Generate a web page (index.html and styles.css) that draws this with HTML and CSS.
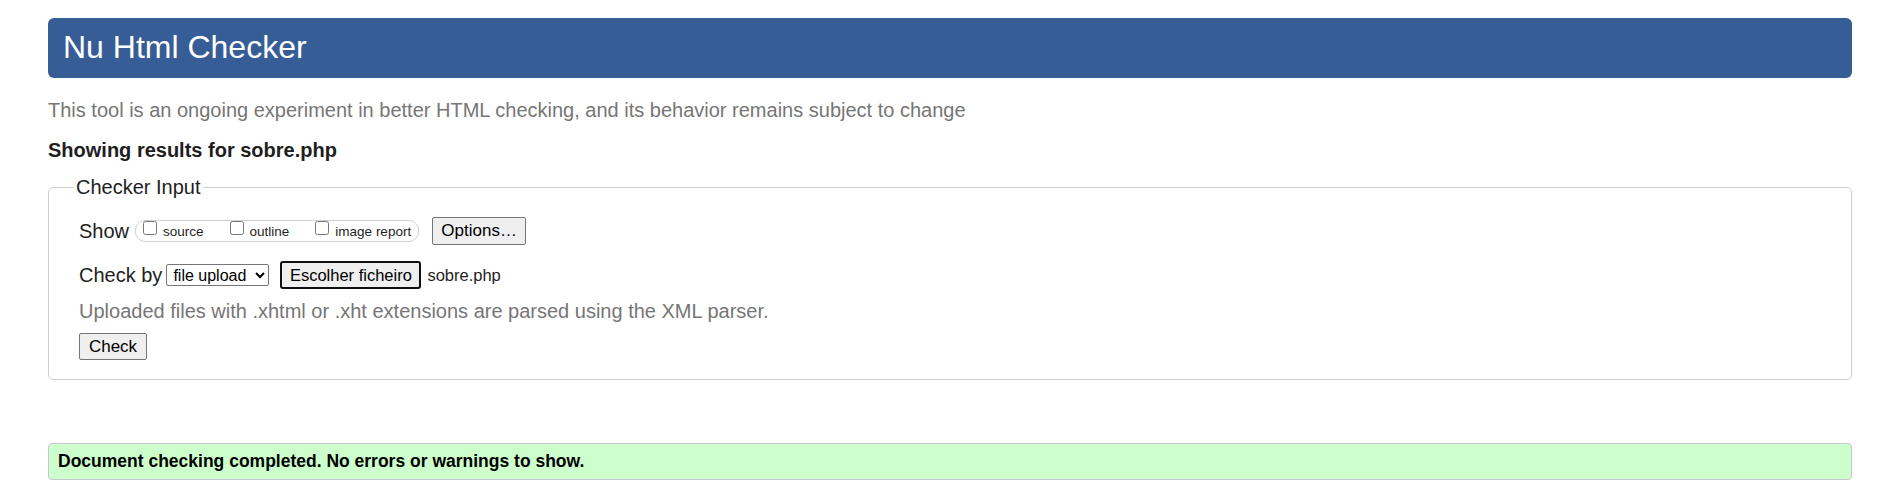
FILE: index.html
```html
<!DOCTYPE html>
<html lang="en">
<head>
<meta charset="utf-8">
<title>Nu Html Checker</title>
<link rel="stylesheet" href="styles.css">
</head>
<body>
<h1 class="title">Nu Html Checker</h1>
<p class="intro">This tool is an ongoing experiment in better HTML checking, and its behavior remains subject to change</p>
<h2 class="results">Showing results for sobre.php</h2>
<fieldset class="checker">
  <legend class="legend">Checker Input</legend>
  <div class="inner">
    <div class="row row-show">
      <span class="label">Show</span>
      <span class="pill">
        <label class="opt"><input type="checkbox" class="cb"><span>source</span></label>
        <label class="opt"><input type="checkbox" class="cb"><span>outline</span></label>
        <label class="opt"><input type="checkbox" class="cb"><span>image report</span></label>
      </span>
      <button class="btn btn-options" type="button">Options…</button>
    </div>
    <div class="row row-check">
      <span class="label">Check by</span>
      <select class="sel"><option>file upload</option></select>
      <button class="btn-file" type="button">Escolher ficheiro</button>
      <span class="filename">sobre.php</span>
    </div>
    <p class="note">Uploaded files with .xhtml or .xht extensions are parsed using the XML parser.</p>
    <div class="actions"><button class="btn btn-check" type="button">Check</button></div>
  </div>
</fieldset>
<div class="success">Document checking completed. No errors or warnings to show.</div>
</body>
</html>
```
FILE: styles.css
```css
html, body { background: #fff; }
body {
  margin: 0;
  padding: 18px 33px 20px 48px;
  font-family: "Liberation Sans", Arial, sans-serif;
  font-size: 20px;
  line-height: 23px;
  color: #1e1e1e;
}
.title {
  margin: 0;
  background: #365d95;
  color: #fff;
  font-size: 32px;
  font-weight: normal;
  line-height: 36px;
  padding: 11px 15px 13px;
  border-radius: 6px;
}
.intro {
  margin: 21px 0 0;
  color: #767676;
}
.results {
  margin: 17px 0 0;
  font-size: 20px;
  font-weight: bold;
  line-height: 23px;
}
.checker {
  margin: 14px 0 0;
  border: 1px solid #cfcfcf;
  border-radius: 5px;
  padding: 0 0 19px 25px;
  min-width: 0;
}
.legend {
  padding: 0 2px;
  font-size: 20px;
  line-height: 23px;
}
.inner { padding-left: 5px; }
.row { display: flex; align-items: center; height: 28px; }
.row-show { margin-top: 18px; }
.row-check { margin-top: 16px; }
.pill {
  display: flex;
  align-items: center;
  height: 22px;
  box-sizing: border-box;
  margin-left: 6px;
  padding: 0 7px;
  border: 1px solid #d0d0d0;
  border-radius: 10px;
  font-size: 13.5px;
  gap: 26px;
}
.opt { display: inline-flex; align-items: center; gap: 6px; }
.cb { width: 14px; height: 14px; margin: 0; position: relative; top: -3px; }
.btn {
  font-family: "Liberation Sans", Arial, sans-serif;
  font-size: 17px;
  color: #000;
  background: #efefef;
  border: 1px solid #767676;
  border-radius: 2px;
  padding: 0;
  height: 28px;
}
.btn-options { width: 94px; margin-left: 13px; }
.sel {
  margin-left: 4px;
  width: 103px;
  height: 22px;
  font-family: "Liberation Sans", Arial, sans-serif;
  font-size: 16px;
  color: #000;
  background: #fff;
  border: 1px solid #767676;
  border-radius: 2px;
  padding: 0 0 0 2px;
}
.btn-file {
  margin-left: 11px;
  width: 141px;
  height: 28px;
  font-family: "Liberation Sans", Arial, sans-serif;
  font-size: 16.5px;
  color: #000;
  background: #efefef;
  border: 2px solid #101010;
  border-radius: 3px;
  padding: 0;
}
.filename { margin-left: 6px; font-size: 16.5px; }
.note { margin: 11px 0 0; color: #767676; }
.actions { margin-top: 10px; height: 27px; }
.btn-check { width: 68px; height: 27px; }
.success {
  margin-top: 63px;
  background: #ccffcc;
  border: 1px solid #c8c5d2;
  border-radius: 4px;
  padding: 7px 9px 8px;
  font-size: 17.5px;
  font-weight: bold;
  line-height: 20px;
  color: #000;
}
```
